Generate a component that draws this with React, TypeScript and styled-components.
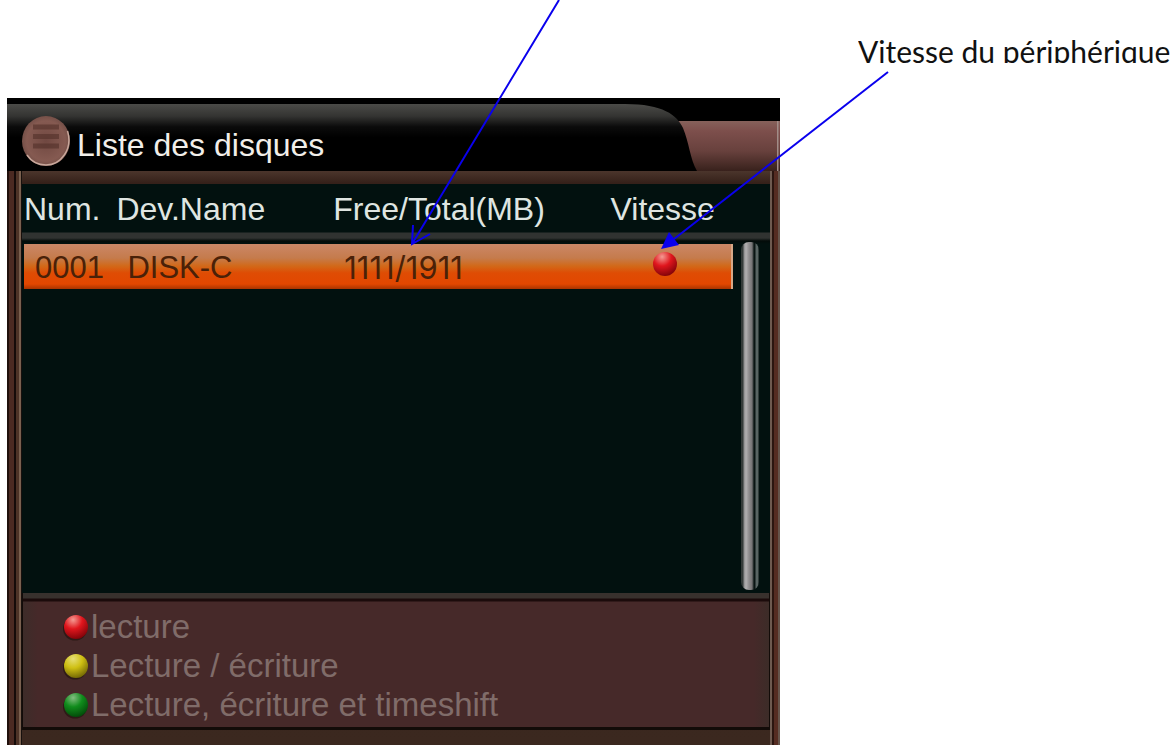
import React from 'react';
import styled, { createGlobalStyle } from 'styled-components';

const GlobalStyle = createGlobalStyle`
  * { box-sizing: border-box; }
  body { margin: 0; background: #fff; }
`;

const Page = styled.main`
  position: relative;
  display: flex;
  align-items: flex-start;
  gap: 78px;
  min-height: 746px;
  padding-left: 7px;
  overflow: hidden;
  font-family: 'Liberation Sans', Arial, sans-serif;
`;

const Panel = styled.section`
  flex: 0 1 773px;
  min-width: 0;
  margin-top: 98px;
  background: #000;
`;

const TitleBar = styled.header`
  position: relative;
  height: 73px;
  display: flex;
  align-items: center;
  gap: 6px;
  padding: 13px 0 0 14px;
  isolation: isolate;
`;

const TabShape = styled.svg`
  position: absolute;
  inset: 0;
  width: 100%;
  height: 100%;
  z-index: -1;
`;

const MenuIcon = styled.svg`
  flex: none;
  width: 50px;
  height: 52px;
`;

const Title = styled.h1`
  margin: 8px 0 0;
  font-weight: 400;
  font-size: 32px;
  line-height: 36px;
  color: #f1eee9;
`;

const Frame = styled.div`
  padding: 13px 10px 15px 15px;
  background:
    linear-gradient(90deg, #21100c 0 2px, #4b2a22 2px 7px, #150b09 7px 9px, #4d3327 9px 12px, #79604f 12px 14px, #17100d 14px 15px, transparent 15px) left / 15px 100% no-repeat,
    linear-gradient(90deg, #6e5a50 0 2px, #2b1510 2px 4px, #552c22 4px 8px, #65544b 8px 10px) right / 10px 100% no-repeat,
    linear-gradient(#4b352c, #35211a 12px, #3b281f);
`;

const ListArea = styled.div`
  display: flex;
  justify-content: space-between;
  height: 409px;
  padding-right: 11px;
  background: linear-gradient(#02110f 0 48px, #303331 49px 54px, #030b09 57px, #02110f 60px);
`;

const Table = styled.table`
  width: 711px;
  height: 105px;
  table-layout: fixed;
  border-collapse: collapse;
  text-align: left;
`;

const Column = styled.col<{ $share: string }>`
  width: ${p => p.$share};
`;

const HeadRow = styled.tr`
  height: 60px;
`;

const HeadCell = styled.th`
  padding: 7px 0 0 2px;
  vertical-align: top;
  font-weight: 400;
  font-size: 32px;
  line-height: 36px;
  white-space: nowrap;
  color: #dfe5e1;
`;

const DiskRow = styled.tr`
  height: 45px;
  background:
    linear-gradient(90deg, #02110f 2px, transparent 2px),
    linear-gradient(270deg, #d7a887 2px, transparent 2px),
    linear-gradient(#cb8767 0, #c57b4c 14px, #d26919 22px, #df4c04 29px, #e24700 40px, #a83400 45px);
`;

const Cell = styled.td`
  padding: 3px 0 0 13px;
  font-size: 31px;
  line-height: 36px;
  white-space: nowrap;
  color: #4a2108;
`;

const SpaceCell = styled(Cell)`
  font-family: Inter, 'Liberation Sans', sans-serif;
`;

const SpeedCell = styled(Cell)`
  padding: 0 0 6px 43px;
  line-height: 0;
`;

const Scrollbar = styled.div`
  width: 18px;
  margin: 58px 0 3px;
  border-radius: 8px;
  background: linear-gradient(90deg, #343b39 0 2px, #8d8d8d 3px, #b2b0b1 5px, #8f8d8e 8px, #767475 11px, #0a1513 13px 14px, #596563 15px, #596563 17px, #07110f 18px);
`;

const Legend = styled.ul`
  list-style: none;
  margin: 0;
  height: 137px;
  padding: 14px 0 0 40px;
  border: solid #120b08;
  border-width: 0 1px 3px;
  background:
    linear-gradient(#38312d 0 5px, #1b0b0b 6px 8px, transparent 9px),
    linear-gradient(90deg, #3d2c29, #462929 15px calc(100% - 15px), #3c2c28);
`;

const LegendItem = styled.li`
  display: flex;
  align-items: center;
  gap: 2px;
  height: 39px;
  font-size: 33px;
  line-height: 39px;
  white-space: nowrap;
  color: #806c69;
`;

const Ball = styled.svg`
  flex: none;
  width: 26px;
  height: 28px;
`;

const Callout = styled.p`
  flex: 1 0 auto;
  height: 28px;
  margin: 35px 0 0;
  overflow: hidden;
  font: 400 30px/32px Lato, sans-serif;
  white-space: nowrap;
  color: #111;
`;

const Arrows = styled.svg`
  position: absolute;
  top: 0;
  left: 0;
  pointer-events: none;
`;

type Tone = 'red' | 'yellow' | 'green';

const tones: Record<Tone, [string, string, string]> = {
  red: ['#f49a92', '#e0161d', '#85040a'],
  yellow: ['#e6df77', '#cfc013', '#776b05'],
  green: ['#83bd80', '#108c1c', '#034d0a'],
};

function StatusBall({ tone, id, shadow = true }: { tone: Tone; id: string; shadow?: boolean }) {
  const [light, base, dark] = tones[tone];
  return (
    <Ball viewBox="0 0 26 28" aria-hidden="true">
      <defs>
        <radialGradient id={id} cx=".38" cy=".2" r=".8">
          <stop offset="0" stopColor={light} />
          <stop offset=".48" stopColor={base} />
          <stop offset="1" stopColor={dark} />
        </radialGradient>
      </defs>
      {shadow && <ellipse cx="12" cy="16" rx="12" ry="11.5" fill="#1e100b" opacity=".6" />}
      <circle cx="13" cy="14" r="12" fill={`url(#${id})`} />
    </Ball>
  );
}

const disks = [{ num: '0001', name: 'DISK-C', space: '1111/1911', tone: 'red' as Tone }];

const legend: { tone: Tone; text: string }[] = [
  { tone: 'red', text: 'lecture' },
  { tone: 'yellow', text: 'Lecture / écriture' },
  { tone: 'green', text: 'Lecture, écriture et timeshift' },
];

export default function App() {
  return (
    <>
      <GlobalStyle />
      <Page>
        <Panel>
          <TitleBar>
            <TabShape viewBox="0 0 773 73" preserveAspectRatio="none" aria-hidden="true">
              <defs>
                <linearGradient id="tab" x1="0" y1="0" x2="0" y2="1">
                  <stop offset="0" stopColor="#4b4b48" />
                  <stop offset=".18" stopColor="#343432" />
                  <stop offset=".34" stopColor="#0b0b0b" />
                  <stop offset=".5" stopColor="#000" />
                </linearGradient>
                <linearGradient id="corner" x1="0" y1="0" x2="0" y2="1">
                  <stop offset="0" stopColor="#86615b" />
                  <stop offset=".2" stopColor="#7d4f4c" />
                  <stop offset=".6" stopColor="#68413d" />
                  <stop offset="1" stopColor="#38211c" />
                </linearGradient>
              </defs>
              <path d="M660 23H773V73H660Z" fill="url(#corner)" />
              <path d="M770 23h1.500v50h-1.500z" fill="#a18c87" />
              <path d="M0 6H618C656 6 670 17 676 30C682 44 683 61 690 73H0Z" fill="url(#tab)" />
            </TabShape>
            <MenuIcon viewBox="0 0 50 52" aria-hidden="true">
              <defs>
                <radialGradient id="disc">
                  <stop offset="0" stopColor="#704841" />
                  <stop offset=".8" stopColor="#855a51" />
                  <stop offset="1" stopColor="#755048" />
                </radialGradient>
              </defs>
              <ellipse cx="25" cy="26" rx="24" ry="25" fill="url(#disc)" />
              <path d="M46.500 16C52 34 40 50 25 50C17 50 10 46 6 40" fill="none" stroke="#c8a79b" strokeWidth="1.500" />
              <path d="M12 12H38M12 21.500H38M12 31H38" stroke="#523029" strokeWidth="5" opacity=".6" />
            </MenuIcon>
            <Title>Liste des disques</Title>
          </TitleBar>
          <Frame>
            <ListArea>
              <Table>
                <colgroup>
                  <Column $share="13%" />
                  <Column $share="30.500%" />
                  <Column $share="39%" />
                  <Column $share="17.500%" />
                </colgroup>
                <thead>
                  <HeadRow>
                    <HeadCell scope="col">Num.</HeadCell>
                    <HeadCell scope="col">Dev.Name</HeadCell>
                    <HeadCell scope="col">Free/Total(MB)</HeadCell>
                    <HeadCell scope="col">Vitesse</HeadCell>
                  </HeadRow>
                </thead>
                <tbody>
                  {disks.map(d => (
                    <DiskRow key={d.num}>
                      <Cell>{d.num}</Cell>
                      <Cell>{d.name}</Cell>
                      <SpaceCell>{d.space}</SpaceCell>
                      <SpeedCell aria-label="lecture">
                        <StatusBall tone={d.tone} id={`disk-${d.num}`} shadow={false} />
                      </SpeedCell>
                    </DiskRow>
                  ))}
                </tbody>
              </Table>
              <Scrollbar />
            </ListArea>
            <Legend>
              {legend.map(item => (
                <LegendItem key={item.tone}>
                  <StatusBall tone={item.tone} id={`legend-${item.tone}`} />
                  {item.text}
                </LegendItem>
              ))}
            </Legend>
          </Frame>
        </Panel>
        <Callout>Vitesse du périphérique</Callout>
        <Arrows width="1174" height="746" aria-hidden="true">
          <g fill="none" stroke="#0a00ed" strokeWidth="2">
            <path d="M559 0L412 244M413 225L412 244L430 234" />
            <path d="M888 72L674 239" />
          </g>
          <path d="M661 249L669 232L679 245Z" fill="#0a00ed" />
        </Arrows>
      </Page>
    </>
  );
}
